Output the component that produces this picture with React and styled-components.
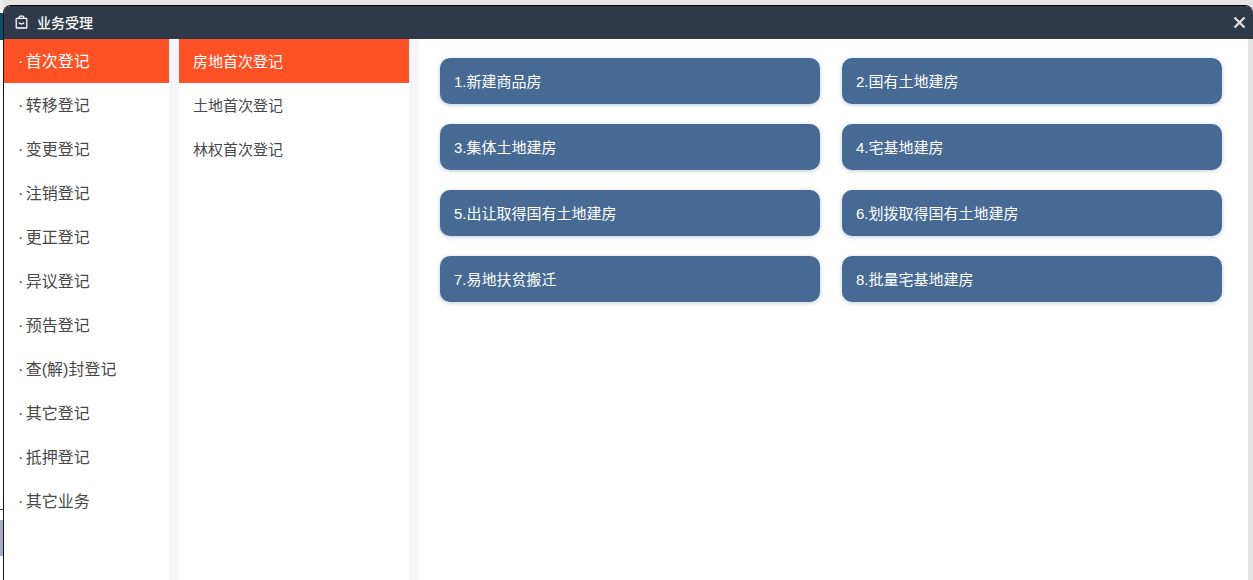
import styled, { createGlobalStyle } from 'styled-components'

const GlobalStyle = createGlobalStyle`
  html, body {
    margin: 0;
    padding: 0;
    height: 580px;
    overflow: hidden;
    background: #e4e4e4;
  }
  #root {
    height: 580px;
  }
`

// the page behind the dialog only shows as a thin strip on the left
const Page = styled.div`
  height: 580px;
  padding: 5px 0 0 3px;
  box-sizing: border-box;
  font-family: "Microsoft YaHei", "Liberation Sans", "Noto Sans CJK SC", sans-serif;
  background:
    linear-gradient(
        #ececec 0 9px,
        #fff 9px 13px,
        #0d4d6b 13px 40px,
        #fff 40px 509px,
        #1c5a5e 509px 510px,
        #fff 510px 520px,
        #a3aec6 520px 556px,
        #fff 556px
      )
      left top / 3px 100% no-repeat,
    #e4e4e4;
`

const Dialog = styled.div`
  height: 575px;
  display: flex;
  flex-direction: column;
  border-radius: 8px 8px 0 0;
  overflow: hidden;
  border-top: 1px solid #000;
  border-left: 1px solid #10151c;
  box-sizing: border-box;
`

const TitleBar = styled.header`
  height: 33px;
  flex: none;
  display: flex;
  align-items: center;
  padding: 0 7px 2px 11px;
  box-sizing: border-box;
  background: #2f3949;
  color: #fff;
  font-size: 14px;
  font-weight: 500;
`

const TitleText = styled.span`
  margin-left: 9px;
  flex: 1;
`

const CloseIcon = styled.svg`
  width: 13px;
  height: 13px;
  margin-top: 2px;
  stroke: #dcdcdc;
  stroke-width: 2.4;
  fill: none;
`

const Body = styled.div`
  flex: 1;
  display: flex;
  gap: 10px;
  margin-right: 5px;
  background: #f5f5fb;
`

const Column = styled.nav`
  width: ${(p) => p.$width}px;
  flex: none;
  background: #fff;
`

const MenuItem = styled.div`
  height: 44px;
  line-height: ${(p) => p.$lineHeight}px;
  padding-left: 14px;
  font-size: ${(p) => p.$size}px;
  word-spacing: -2px;
  background: ${(p) => (p.$active ? '#ff5126' : 'transparent')};
  color: ${(p) => (p.$active ? '#fff' : '#484848')};
`

const Content = styled.main`
  flex: 1;
  background: #fff;
  padding: 19px 26px 0 21px;
`

const ButtonGrid = styled.div`
  display: grid;
  grid-template-columns: 380px 380px;
  column-gap: 22px;
  row-gap: 20px;
`

const ActionButton = styled.button`
  height: 46px;
  padding: 0 0 2px 14px;
  border: none;
  border-radius: 10px;
  background: #466a94;
  box-shadow: 0 1px 4px rgba(70, 106, 148, 0.35);
  color: #fff;
  font-family: inherit;
  font-size: 15px;
  text-align: left;
`

const mainMenu = [
  '首次登记',
  '转移登记',
  '变更登记',
  '注销登记',
  '更正登记',
  '异议登记',
  '预告登记',
  '查(解)封登记',
  '其它登记',
  '抵押登记',
  '其它业务',
]

const subMenu = ['房地首次登记', '土地首次登记', '林权首次登记']

const actions = [
  '1.新建商品房',
  '2.国有土地建房',
  '3.集体土地建房',
  '4.宅基地建房',
  '5.出让取得国有土地建房',
  '6.划拨取得国有土地建房',
  '7.易地扶贫搬迁',
  '8.批量宅基地建房',
]

const App = () => {
  return (
    <Page>
      <GlobalStyle />
      <Dialog>
        <TitleBar>
          <svg width="13" height="14" viewBox="0 0 13 14" fill="none" stroke="#fff" strokeWidth="1.3">
            <rect x="1.2" y="3.4" width="10.6" height="9.6" rx="0.6" />
            <path d="M4.2 3.4V2.2a1 1 0 0 1 1-1h2.6a1 1 0 0 1 1 1v1.2" />
            <path d="M4 7.6c1 1.8 4 1.8 5 0" />
          </svg>
          <TitleText>业务受理</TitleText>
          <CloseIcon viewBox="0 0 13 13">
            <path d="M1.5 1.5l10 10M11.5 1.5l-10 10" />
          </CloseIcon>
        </TitleBar>
        <Body>
          <Column $width={165}>
            {mainMenu.map((item, i) => (
              <MenuItem key={item} $size={16} $lineHeight={46} $active={i === 0}>
                · {item}
              </MenuItem>
            ))}
          </Column>
          <Column $width={230}>
            {subMenu.map((item, i) => (
              <MenuItem key={item} $size={15} $lineHeight={45} $active={i === 0}>
                {item}
              </MenuItem>
            ))}
          </Column>
          <Content>
            <ButtonGrid>
              {actions.map((item) => (
                <ActionButton key={item}>{item}</ActionButton>
              ))}
            </ButtonGrid>
          </Content>
        </Body>
      </Dialog>
    </Page>
  )
}

export default App
